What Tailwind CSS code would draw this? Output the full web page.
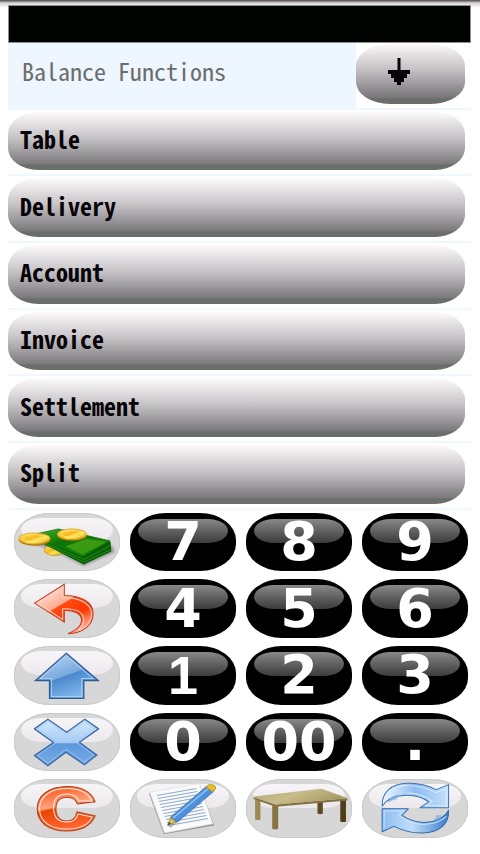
<!DOCTYPE html>
<html lang="en">
<head>
<meta charset="utf-8">
<meta name="viewport" content="width=device-width, initial-scale=1">
<title>Balance Functions</title>
<script src="https://cdn.jsdelivr.net/npm/@tailwindcss/browser@4"></script>
</head>
<body class="bg-white">
<main class="flex min-h-screen flex-col bg-linear-to-b from-[#4d494d] via-[#d8d5d8] via-[3px] to-white to-[8px] pt-[5px] pb-[11px]">
  <div class="mr-[9px] ml-2 h-[38px] border border-[#8f8f8f] bg-[#000300]"></div>
  <div class="grid flex-1 auto-rows-fr">
    <header class="mr-[9px] ml-2 flex border-b-2 border-[#eef6ff]">
      <h1 class="flex-1 bg-[#eef6ff] pt-3 pl-3.5 font-['Noto_Sans_Mono_CJK_JP','DejaVu_Sans_Mono',monospace] text-2xl leading-8 text-[#6b6d6b]">Balance Functions</h1>
      <button type="button" aria-label="Scroll down" class="mt-px mr-1.5 mb-1 w-[109px] rounded-[34px/22px] bg-[linear-gradient(#fdf8fa,#c0bec0_45%,#777577_90%,#6a6e6a_91%)]">
        <svg class="mb-1 ml-8 h-7 w-[22px]" viewBox="0 0 22 28"><path d="M9.500 0h3v12H22v4h-3v4h-3v4h-3v3H9v-3H6v-4H3v-4H0v-4h9.500z" fill="#080008"/></svg>
      </button>
    </header>

    <div class="mr-[9px] ml-2 flex border-b-2 border-[#f0f8ff] pt-0.5 pb-1"><button type="button" class="mr-1.5 flex-1 rounded-[30px/22px] bg-[linear-gradient(#fdfafc,#c5c3c5_45%,#7b787b_90%,#6a6e6a_91%)] pb-1 pl-3 text-left font-['Noto_Sans_Mono_CJK_JP','DejaVu_Sans_Mono',monospace] text-2xl leading-8 font-bold text-[#080408]">Table</button></div>
    <div class="mr-[9px] ml-2 flex border-b-2 border-[#f0f8ff] pt-0.5 pb-1"><button type="button" class="mr-1.5 flex-1 rounded-[30px/22px] bg-[linear-gradient(#fdfafc,#c5c3c5_45%,#7b787b_90%,#6a6e6a_91%)] pb-1 pl-3 text-left font-['Noto_Sans_Mono_CJK_JP','DejaVu_Sans_Mono',monospace] text-2xl leading-8 font-bold text-[#080408]">Delivery</button></div>
    <div class="mr-[9px] ml-2 flex border-b-2 border-[#f0f8ff] pt-0.5 pb-1"><button type="button" class="mr-1.5 flex-1 rounded-[30px/22px] bg-[linear-gradient(#fdfafc,#c5c3c5_45%,#7b787b_90%,#6a6e6a_91%)] pb-1 pl-3 text-left font-['Noto_Sans_Mono_CJK_JP','DejaVu_Sans_Mono',monospace] text-2xl leading-8 font-bold text-[#080408]">Account</button></div>
    <div class="mr-[9px] ml-2 flex border-b-2 border-[#f0f8ff] pt-0.5 pb-1"><button type="button" class="mr-1.5 flex-1 rounded-[30px/22px] bg-[linear-gradient(#fdfafc,#c5c3c5_45%,#7b787b_90%,#6a6e6a_91%)] pb-1 pl-3 text-left font-['Noto_Sans_Mono_CJK_JP','DejaVu_Sans_Mono',monospace] text-2xl leading-8 font-bold text-[#080408]">Invoice</button></div>
    <div class="mr-[9px] ml-2 flex border-b-2 border-[#f0f8ff] pt-0.5 pb-1"><button type="button" class="mr-1.5 flex-1 rounded-[30px/22px] bg-[linear-gradient(#fdfafc,#c5c3c5_45%,#7b787b_90%,#6a6e6a_91%)] pb-1 pl-3 text-left font-['Noto_Sans_Mono_CJK_JP','DejaVu_Sans_Mono',monospace] text-2xl leading-8 font-bold text-[#080408]">Settlement</button></div>
    <div class="mr-[9px] ml-2 flex border-b-2 border-[#f0f8ff] pt-0.5 pb-1"><button type="button" class="mr-1.5 flex-1 rounded-[30px/22px] bg-[linear-gradient(#fdfafc,#c5c3c5_45%,#7b787b_90%,#6a6e6a_91%)] pb-1 pl-3 text-left font-['Noto_Sans_Mono_CJK_JP','DejaVu_Sans_Mono',monospace] text-2xl leading-8 font-bold text-[#080408]">Split</button></div>

    <div class="grid grid-cols-4 gap-x-2.5 pt-[3px] pr-3 pb-[5px] pl-3.5">
      <button type="button" aria-label="Cash" class="relative rounded-[36px/27px] bg-[#d7d7d7] inset-ring inset-ring-[#cacaca]">
        <span class="absolute inset-x-[7px] top-[5px] h-6 rounded-[20px/12px] bg-linear-to-b from-[#f8f5f8] to-[#ece8ec]"></span>
        <svg class="absolute inset-0 h-full w-full overflow-visible" viewBox="42 22 316 177" preserveAspectRatio="none">
          <defs>
            <linearGradient id="coin" x2="1" y2="1"><stop stop-color="#ffe36a"/><stop offset=".45" stop-color="#f5b91c"/><stop offset=".6" stop-color="#ffe55c"/><stop offset="1" stop-color="#c98a00"/></linearGradient>
            <linearGradient id="note" x2="1" y2="1"><stop stop-color="#42b62c"/><stop offset=".4" stop-color="#0b7407"/><stop offset="1" stop-color="#228f10"/></linearGradient>
            <filter id="soft"><feGaussianBlur stdDeviation="4"/></filter>
          </defs>
          <path d="M80 112l70 18 100 52 92-42-8-20-130-10z" fill="#555" opacity=".5" filter="url(#soft)"/>
          <ellipse cx="163" cy="134" rx="31" ry="16" fill="url(#coin)" stroke="#c08a10" stroke-width="2"/>
          <path d="M120 100l50-20 160 28 2 30-82 39-128-65z" fill="#065f04"/>
          <path d="M124 110l126 60 82-38M124 106l126 56 80-42" fill="none" stroke="#38a020" stroke-width="2"/>
          <path d="M112 84l62-14 154 36-80 47-130-50z" fill="url(#note)" stroke="#0b6606" stroke-width="2"/>
          <path d="M196 122l62-22 60 9-72 38z" fill="#3a9b12"/>
          <ellipse cx="103" cy="103" rx="47" ry="18" fill="#ad7707"/><ellipse cx="103" cy="99" rx="47" ry="17" fill="url(#coin)" stroke="#d79c12" stroke-width="2"/><ellipse cx="103" cy="98" rx="36" ry="11" fill="none" stroke="#fff08a" stroke-width="2"/>
          <ellipse cx="215" cy="90" rx="44" ry="16" fill="#ad7707"/><ellipse cx="215" cy="86" rx="44" ry="16" fill="url(#coin)" stroke="#d79c12" stroke-width="2"/><ellipse cx="215" cy="85" rx="33" ry="10" fill="none" stroke="#fff08a" stroke-width="2"/>
        </svg>
      </button>
      <button type="button" class="relative rounded-[36px/27px] bg-black font-['DejaVu_Sans',sans-serif] text-[54px] leading-none font-bold text-white"><span class="absolute inset-x-2 top-1.5 h-6 rounded-[20px/12px] bg-linear-to-b from-[#898989] to-[#3c3c3c]"></span><span class="relative">7</span></button>
      <button type="button" class="relative rounded-[36px/27px] bg-black font-['DejaVu_Sans',sans-serif] text-[54px] leading-none font-bold text-white"><span class="absolute inset-x-2 top-1.5 h-6 rounded-[20px/12px] bg-linear-to-b from-[#898989] to-[#3c3c3c]"></span><span class="relative">8</span></button>
      <button type="button" class="relative rounded-[36px/27px] bg-black font-['DejaVu_Sans',sans-serif] text-[54px] leading-none font-bold text-white"><span class="absolute inset-x-2 top-1.5 h-6 rounded-[20px/12px] bg-linear-to-b from-[#898989] to-[#3c3c3c]"></span><span class="relative">9</span></button>
    </div>

    <div class="grid grid-cols-4 gap-x-2.5 pt-[3px] pr-3 pb-[5px] pl-3.5">
      <button type="button" aria-label="Undo" class="relative rounded-[36px/27px] bg-[#d7d7d7] inset-ring inset-ring-[#cacaca]">
        <span class="absolute inset-x-[7px] top-[5px] h-6 rounded-[20px/12px] bg-linear-to-b from-[#f8f5f8] to-[#ece8ec]"></span>
        <svg class="absolute inset-0 h-full w-full" viewBox="42 222 316 178" preserveAspectRatio="none">
          <defs><linearGradient id="undo" x2=".7" y2="1"><stop stop-color="#fff"/><stop offset=".48" stop-color="#ffaa91"/><stop offset=".5" stop-color="#ff4a12"/><stop offset=".75" stop-color="#fb3700"/><stop offset="1" stop-color="#ffb09a"/></linearGradient></defs>
          <path d="M103 295l89-57v34c50 0 86 20 86 55 0 36-31 60-75 61 29-12 42-28 40-45-2-15-20-26-51-25v35z" fill="url(#undo)" stroke="#ca3a1c" stroke-width="3"/>
          <path d="M113 295l74-47v30c48 0 84 17 86 47 1 25-16 45-43 55 15-12 22-24 20-39-3-20-25-30-63-29v33z" fill="none" stroke="#ffd1c3" stroke-width="3"/>
        </svg>
      </button>
      <button type="button" class="relative rounded-[36px/27px] bg-black font-['DejaVu_Sans',sans-serif] text-[54px] leading-none font-bold text-white"><span class="absolute inset-x-2 top-1.5 h-6 rounded-[20px/12px] bg-linear-to-b from-[#898989] to-[#3c3c3c]"></span><span class="relative">4</span></button>
      <button type="button" class="relative rounded-[36px/27px] bg-black font-['DejaVu_Sans',sans-serif] text-[54px] leading-none font-bold text-white"><span class="absolute inset-x-2 top-1.5 h-6 rounded-[20px/12px] bg-linear-to-b from-[#898989] to-[#3c3c3c]"></span><span class="relative">5</span></button>
      <button type="button" class="relative rounded-[36px/27px] bg-black font-['DejaVu_Sans',sans-serif] text-[54px] leading-none font-bold text-white"><span class="absolute inset-x-2 top-1.5 h-6 rounded-[20px/12px] bg-linear-to-b from-[#898989] to-[#3c3c3c]"></span><span class="relative">6</span></button>
    </div>

    <div class="grid grid-cols-4 gap-x-2.5 pt-[3px] pr-3 pb-[5px] pl-3.5">
      <button type="button" aria-label="Up" class="relative rounded-[36px/27px] bg-[#d7d7d7] inset-ring inset-ring-[#cacaca]">
        <span class="absolute inset-x-[7px] top-[5px] h-6 rounded-[20px/12px] bg-linear-to-b from-[#f8f5f8] to-[#ece8ec]"></span>
        <svg class="absolute inset-0 h-full w-full" viewBox="42 18 316 177" preserveAspectRatio="none">
          <defs><linearGradient id="up" x2=".5" y2="1"><stop stop-color="#c2dcf3"/><stop offset=".58" stop-color="#78a9df"/><stop offset=".6" stop-color="#4c88cd"/><stop offset="1" stop-color="#7fb4ea"/></linearGradient></defs>
          <path d="M198 40l95 82h-43v54H148v-54h-42z" fill="url(#up)" stroke="#2f5b95" stroke-width="4"/>
          <path d="M198 48l79 68h-33v54h-90v-54h-33z" fill="none" stroke="#a9cdf1" stroke-width="3"/>
        </svg>
      </button>
      <button type="button" class="relative rounded-[36px/27px] bg-black font-['Liberation_Sans',sans-serif] text-[54px] leading-none font-bold text-white"><span class="absolute inset-x-2 top-1.5 h-6 rounded-[20px/12px] bg-linear-to-b from-[#898989] to-[#3c3c3c]"></span><span class="relative">1</span></button>
      <button type="button" class="relative rounded-[36px/27px] bg-black font-['DejaVu_Sans',sans-serif] text-[54px] leading-none font-bold text-white"><span class="absolute inset-x-2 top-1.5 h-6 rounded-[20px/12px] bg-linear-to-b from-[#898989] to-[#3c3c3c]"></span><span class="relative">2</span></button>
      <button type="button" class="relative rounded-[36px/27px] bg-black font-['DejaVu_Sans',sans-serif] text-[54px] leading-none font-bold text-white"><span class="absolute inset-x-2 top-1.5 h-6 rounded-[20px/12px] bg-linear-to-b from-[#898989] to-[#3c3c3c]"></span><span class="relative">3</span></button>
    </div>

    <div class="grid grid-cols-4 gap-x-2.5 pt-[3px] pr-3 pb-[5px] pl-3.5">
      <button type="button" aria-label="Cancel" class="relative rounded-[36px/27px] bg-[#d7d7d7] inset-ring inset-ring-[#cacaca]">
        <span class="absolute inset-x-[7px] top-[5px] h-6 rounded-[20px/12px] bg-linear-to-b from-[#f8f5f8] to-[#ece8ec]"></span>
        <svg class="absolute inset-0 h-full w-full" viewBox="42 218 316 177" preserveAspectRatio="none">
          <defs><linearGradient id="cross" x2="0" y2="1"><stop stop-color="#d3e8fc"/><stop offset=".5" stop-color="#a5cbf3"/><stop offset=".53" stop-color="#5d98dc"/><stop offset="1" stop-color="#78abe5"/></linearGradient></defs>
          <path d="M143 237l56 39 54-39 41 29-57 40 52 39-37 29-55-38-54 41-40-31 57-39-57-41z" fill="url(#cross)" stroke="#3c6ca8" stroke-width="4" stroke-linejoin="round"/>
          <path d="M143 244l56 39 54-39 31 22-57 40 52 38-27 22-55-38-54 41-30-23 57-40-57-41z" fill="none" stroke="#a4caf2" stroke-width="2"/>
        </svg>
      </button>
      <button type="button" class="relative rounded-[36px/27px] bg-black font-['DejaVu_Sans',sans-serif] text-[54px] leading-none font-bold text-white"><span class="absolute inset-x-2 top-1.5 h-6 rounded-[20px/12px] bg-linear-to-b from-[#898989] to-[#3c3c3c]"></span><span class="relative">0</span></button>
      <button type="button" class="relative rounded-[36px/27px] bg-black font-['DejaVu_Sans',sans-serif] text-[54px] leading-none font-bold text-white"><span class="absolute inset-x-2 top-1.5 h-6 rounded-[20px/12px] bg-linear-to-b from-[#898989] to-[#3c3c3c]"></span><span class="relative">00</span></button>
      <button type="button" class="relative rounded-[36px/27px] bg-black font-['DejaVu_Sans',sans-serif] text-[54px] leading-none font-bold text-white"><span class="absolute inset-x-2 top-1.5 h-6 rounded-[20px/12px] bg-linear-to-b from-[#898989] to-[#3c3c3c]"></span><span class="relative">.</span></button>
    </div>

    <div class="grid grid-cols-4 gap-x-2.5 pt-[3px] pr-3 pb-[5px] pl-3.5">
      <button type="button" aria-label="Clear" class="relative rounded-[36px/27px] bg-[#d7d7d7] inset-ring inset-ring-[#cacaca]">
        <span class="absolute inset-x-[7px] top-[5px] h-6 rounded-[20px/12px] bg-linear-to-b from-[#f8f5f8] to-[#ece8ec]"></span>
        <svg class="absolute inset-0 h-full w-full" viewBox="42 29 316 177" preserveAspectRatio="none">
          <defs><linearGradient id="clear" x2=".25" y2="1"><stop stop-color="#ff4d0a"/><stop offset=".5" stop-color="#ffa27e"/><stop offset=".55" stop-color="#e84400"/><stop offset="1" stop-color="#ff6530"/></linearGradient></defs>
          <path d="M284 98c-12-31-42-46-83-46-55 0-90 27-90 67 0 41 34 67 88 67 43 0 72-15 85-46l-54-12c-4 19-14 28-30 28-22 0-33-13-33-37s11-35 34-35c15 0 25 7 30 20z" fill="url(#clear)" stroke="#b2431c" stroke-width="3"/>
          <path d="M275 96c-13-26-37-38-74-38-50 0-83 23-83 61s32 61 81 61c39 0 64-12 76-36l-42-9c-5 17-16 24-33 24-26 0-40-16-40-43s15-42 41-42c17 0 29 7 34 21z" fill="none" stroke="#fff1e8" stroke-width="3"/>
        </svg>
      </button>
      <button type="button" aria-label="Note" class="relative rounded-[36px/27px] bg-[#d7d7d7] inset-ring inset-ring-[#cacaca]">
        <span class="absolute inset-x-[7px] top-[5px] h-6 rounded-[20px/12px] bg-linear-to-b from-[#f8f5f8] to-[#ece8ec]"></span>
        <svg class="absolute inset-0 h-full w-full" viewBox="390 29 316 177" preserveAspectRatio="none">
          <path d="M446 72l153-25 42 122-150 27z" fill="#666" opacity=".55"/>
          <path d="M449 69l148-27 40 122-144 28z" fill="#fafafa" stroke="#ddd" stroke-width="2"/>
          <path d="M470 79l118-21M473 88l118-21M476 97l118-21M479 106l118-21M483 115l118-21M486 124l118-21M490 133l118-21M493 142l118-21M497 151l118-21M500 160l118-21M504 169l118-21" stroke="#8fabc8" stroke-width="3"/>
          <path d="M507 174L629 66" stroke="#666" stroke-width="10" opacity=".35"/>
          <path d="M502 169l9-24 18 13z" fill="#dcc04c" stroke="#92772c" stroke-width="2"/>
          <path d="M511 144L616 53l24 13-109 93z" fill="#4d91dc" stroke="#2861a1" stroke-width="2"/><path d="M518 147L623 58" stroke="#8bbdf0" stroke-width="5"/>
          <path d="M616 53l9-7q16-1 20 7l-1 8-8 7z" fill="#e8bd27" stroke="#9c8430" stroke-width="2"/><path d="M502 169l4-10 6 5z" fill="#3b4654"/>
        </svg>
      </button>
      <button type="button" aria-label="Table plan" class="relative rounded-[36px/27px] bg-[#d7d7d7] inset-ring inset-ring-[#cacaca]">
        <span class="absolute inset-x-[7px] top-[5px] h-6 rounded-[20px/12px] bg-linear-to-b from-[#f8f5f8] to-[#ece8ec]"></span>
        <svg class="absolute inset-0 h-full w-full" viewBox="18 29 316 177" preserveAspectRatio="none">
          <defs><linearGradient id="wood"><stop stop-color="#9e8d55"/><stop offset=".5" stop-color="#695729"/><stop offset="1" stop-color="#4c3b15"/></linearGradient><linearGradient id="top" x2="1" y2=".4"><stop stop-color="#b7a875"/><stop offset=".5" stop-color="#c9bd8c"/><stop offset="1" stop-color="#a79962"/></linearGradient></defs>
          <path d="M45 92h16v59q-8 4-16 0zM231 98h16v35q-8 4-16 0zM299 93h17v64q-8 4-17 0zM96 108h18v71q-9 5-18 0z" fill="url(#wood)"/>
          <path d="M41 84l65 22 214-19v7l-214 19-65-23z" fill="#817044"/>
          <path d="M41 83l202-24 77 28-214 19z" fill="url(#top)" stroke="#a69965" stroke-width="1"/>
        </svg>
      </button>
      <button type="button" aria-label="Refresh" class="relative rounded-[36px/27px] bg-[#d7d7d7] inset-ring inset-ring-[#cacaca]">
        <span class="absolute inset-x-[7px] top-[5px] h-6 rounded-[20px/12px] bg-linear-to-b from-[#f8f5f8] to-[#ece8ec]"></span>
        <svg class="absolute inset-0 h-full w-full" viewBox="366 29 316 177" preserveAspectRatio="none">
          <defs><linearGradient id="ra"><stop stop-color="#eff8ff"/><stop offset=".5" stop-color="#8fbcf0"/><stop offset="1" stop-color="#c5e0fa"/></linearGradient><linearGradient id="rb"><stop stop-color="#8dbcf0"/><stop offset=".45" stop-color="#c0ddfa"/><stop offset="1" stop-color="#3a7dca"/></linearGradient></defs>
          <path d="M426 111c-2-41 26-68 76-69 32-1 61 7 85 19l37-15v70h-86l27-18c-18-14-39-20-65-20-35 0-58 9-74 33z" fill="url(#ra)" stroke="#3e76ba" stroke-width="3" stroke-linejoin="round"/>
          <path d="M434 96c11-34 37-48 70-47 31 0 58 8 83 21l31-13v53h-62l20-13c-25-20-49-26-76-26" fill="none" stroke="#d9edff" stroke-width="3"/>
          <path d="M624 123c3 42-28 68-78 69-32 1-60-8-85-20l-35 16v-69h78l-19 20c19 13 39 20 63 21 36 0 62-12 76-37z" fill="url(#rb)" stroke="#3169ad" stroke-width="3" stroke-linejoin="round"/>
          <path d="M432 178v-53h58l-14 14c22 18 46 27 71 27 31 0 54-8 70-24" fill="none" stroke="#c8e4ff" stroke-width="3"/>
          <path d="M444 94q12-16 34-18l-8 14q-15 2-26 11zM608 139q-12 14-32 19 11-9 12-20z" fill="#7aabe3" opacity=".7"/>
        </svg>
      </button>
    </div>
  </div>
</main>
</body>
</html>
